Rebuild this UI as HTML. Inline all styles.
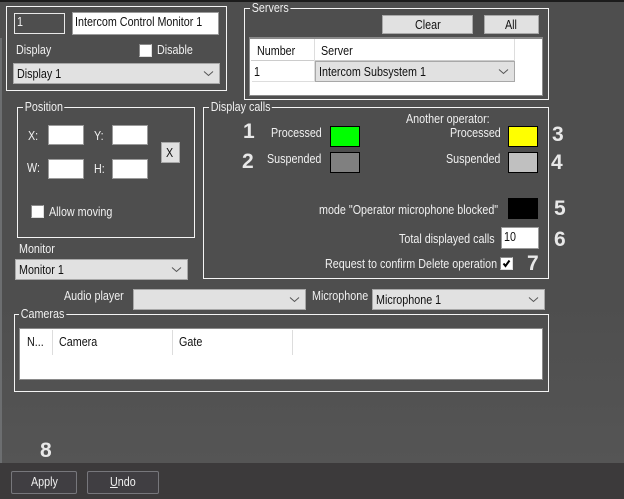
<!DOCTYPE html>
<html><head><meta charset="utf-8"><style>
html,body{margin:0;padding:0}
body{width:624px;height:499px;overflow:hidden;position:relative;background:#4e4e4e;font-family:"Liberation Sans",sans-serif;font-size:12.5px;color:#f0f0f0}
div,span{position:absolute;box-sizing:border-box;white-space:nowrap}
.fr{border:1px solid #f4f4f4}
.lg{background:#4e4e4e;padding:0 2px;line-height:12px;height:12px;transform:scaleX(.86);transform-origin:0 0}
.t{line-height:14px;height:14px;transform:scaleX(.86);transform-origin:0 0}
.d{color:#111}
.in{background:#fff;border:1px solid #9a9a9a}
.cb{background:#e1e1e1;border:1px solid #a8a8a8}
.cb svg{position:absolute;right:5px;top:6px}
.sw{width:30px;height:21px;border:1px solid #000}
.btn{background:#e1e1e1;border:1px solid #a8a8a8}
.n{font-weight:bold;font-size:21px;line-height:22px;height:22px;color:#e8e8e8}
.chk{width:13px;height:13px;background:#fff;border:1px solid #8a8a8a;border-right-color:#ddd;border-bottom-color:#ddd}
.bb{background:#403e42;border:1px solid #77777c;border-radius:2px}
.sep{width:1px;background:#ddd}
</style></head><body>
<div style="left:0;top:0;width:624px;height:2px;background:#1c1c1c"></div>
<div style="left:0;top:38px;width:2px;height:425px;background:#6c6e70"></div>
<div style="left:2px;top:300px;width:622px;height:163px;background:linear-gradient(#4e4e4e,#555)"></div>

<div class="fr" style="left:6px;top:6px;width:221px;height:85px"></div>
<div style="left:14px;top:13px;width:51px;height:21px;border:1px solid #e8e8e8"></div>
<div class="t" style="left:17px;top:15px">1</div>
<div class="in" style="left:72px;top:12px;width:147px;height:23px"></div>
<div class="t d" style="left:75px;top:15px">Intercom Control Monitor 1</div>
<div class="t" style="left:16px;top:43px">Display</div>
<div class="chk" style="left:139px;top:44px"></div>
<div class="t" style="left:157px;top:43px">Disable</div>
<div class="cb" style="left:13px;top:63px;width:207px;height:21px"><svg width="11" height="7"><path d="M1 1.5l4.5 4 4.5-4" fill="none" stroke="#555"/></svg></div>
<div class="t d" style="left:17px;top:67px">Display 1</div>

<div class="fr" style="left:244px;top:8px;width:305px;height:92px"></div>
<div class="lg" style="left:250px;top:2px">Servers</div>
<div class="btn" style="left:382px;top:15px;width:91px;height:19px"></div>
<div class="t d" style="left:415px;top:18px">Clear</div>
<div class="btn" style="left:484px;top:15px;width:55px;height:19px"></div>
<div class="t d" style="left:505px;top:18px">All</div>
<div style="left:249px;top:37px;width:294px;height:59px;background:#fff;border:1px solid #8a8a8a;border-width:2px 1px 1px 1px"></div>
<div style="left:251px;top:39px;width:264px;height:22px;border-bottom:1px solid #ccc"></div>
<div class="sep" style="left:314px;top:39px;height:43px"></div>
<div class="sep" style="left:514px;top:39px;height:22px"></div>
<div class="t d" style="left:257px;top:44px">Number</div>
<div class="t d" style="left:321px;top:44px">Server</div>
<div style="left:252px;top:81px;width:63px;height:1px;background:#ddd"></div>
<div class="t d" style="left:254px;top:65px">1</div>
<div class="cb" style="left:315px;top:61px;width:200px;height:21px"><svg width="11" height="7"><path d="M1 1.5l4.5 4 4.5-4" fill="none" stroke="#555"/></svg></div>
<div class="t d" style="left:319px;top:65px">Intercom Subsystem 1</div>

<div class="fr" style="left:17px;top:107px;width:178px;height:131px"></div>
<div class="lg" style="left:23px;top:101px">Position</div>
<div class="t" style="left:28px;top:129px">X:</div>
<div class="in" style="left:48px;top:125px;width:36px;height:20px"></div>
<div class="t" style="left:94px;top:129px">Y:</div>
<div class="in" style="left:112px;top:125px;width:36px;height:20px"></div>
<div class="t" style="left:27px;top:161px">W:</div>
<div class="in" style="left:48px;top:159px;width:36px;height:20px"></div>
<div class="t" style="left:94px;top:162px">H:</div>
<div class="in" style="left:112px;top:159px;width:36px;height:20px"></div>
<div class="btn" style="left:161px;top:142px;width:19px;height:21px"></div>
<div class="t d" style="left:166px;top:146px">X</div>
<div class="chk" style="left:31px;top:205px"></div>
<div class="t" style="left:49px;top:205px">Allow moving</div>

<div class="t" style="left:19px;top:242px">Monitor</div>
<div class="cb" style="left:15px;top:259px;width:173px;height:21px"><svg width="11" height="7"><path d="M1 1.5l4.5 4 4.5-4" fill="none" stroke="#555"/></svg></div>
<div class="t d" style="left:19px;top:263px">Monitor 1</div>

<div class="fr" style="left:203px;top:107px;width:346px;height:172px"></div>
<div class="lg" style="left:209px;top:101px">Display calls</div>
<div class="n" style="left:243px;top:121px">1</div>
<div class="n" style="left:242px;top:151px">2</div>
<div class="t" style="left:271px;top:126px">Processed</div>
<div class="t" style="left:267px;top:152px">Suspended</div>
<div class="sw" style="left:330px;top:126px;background:#00ff00"></div>
<div class="sw" style="left:330px;top:152px;background:#808080"></div>
<div class="t" style="left:406px;top:112px">Another operator:</div>
<div class="t" style="left:450px;top:126px">Processed</div>
<div class="t" style="left:446px;top:152px">Suspended</div>
<div class="sw" style="left:508px;top:126px;background:#ffff00"></div>
<div class="sw" style="left:508px;top:152px;background:#c0c0c0"></div>
<div class="n" style="left:552px;top:124px">3</div>
<div class="n" style="left:551px;top:152px">4</div>
<div class="t" style="left:319px;top:203px">mode "Operator microphone blocked"</div>
<div class="sw" style="left:508px;top:198px;background:#000"></div>
<div class="n" style="left:554px;top:198px">5</div>
<div class="t" style="left:399px;top:232px">Total displayed calls</div>
<div class="in" style="left:501px;top:227px;width:38px;height:22px"></div>
<div class="t d" style="left:504px;top:230px">10</div>
<div class="n" style="left:554px;top:229px">6</div>
<div class="t" style="left:325px;top:257px">Request to confirm Delete operation</div>
<div class="chk" style="left:500px;top:257px"><svg width="11" height="11" style="position:absolute;left:0;top:0"><path d="M2.5 5.5l2 2.5 4-5.5" fill="none" stroke="#000" stroke-width="2"/></svg></div>
<div class="n" style="left:527px;top:253px">7</div>

<div class="t" style="left:64px;top:289px">Audio player</div>
<div class="cb" style="left:133px;top:289px;width:173px;height:21px"><svg width="11" height="7"><path d="M1 1.5l4.5 4 4.5-4" fill="none" stroke="#555"/></svg></div>
<div class="t" style="left:312px;top:289px">Microphone</div>
<div class="cb" style="left:372px;top:289px;width:173px;height:21px"><svg width="11" height="7"><path d="M1 1.5l4.5 4 4.5-4" fill="none" stroke="#555"/></svg></div>
<div class="t d" style="left:376px;top:293px">Microphone 1</div>

<div class="fr" style="left:14px;top:314px;width:535px;height:78px"></div>
<div class="lg" style="left:19px;top:308px">Cameras</div>
<div style="left:19px;top:328px;width:524px;height:52px;background:#fff;border:1px solid #8a8a8a"></div>
<div class="sep" style="left:52px;top:330px;height:25px"></div>
<div class="sep" style="left:172px;top:330px;height:25px"></div>
<div class="sep" style="left:292px;top:330px;height:25px"></div>
<div class="t d" style="left:27px;top:335px">N...</div>
<div class="t d" style="left:59px;top:335px">Camera</div>
<div class="t d" style="left:179px;top:335px">Gate</div>

<div class="n" style="left:40px;top:440px">8</div>
<div style="left:0;top:463px;width:624px;height:36px;background:#3c3a3b"></div>
<div class="bb" style="left:11px;top:471px;width:66px;height:23px"></div>
<div class="t" style="left:31px;top:475px">Apply</div>
<div class="bb" style="left:87px;top:471px;width:72px;height:23px"></div>
<div class="t" style="left:110px;top:475px"><u>U</u>ndo</div>
</body></html>
